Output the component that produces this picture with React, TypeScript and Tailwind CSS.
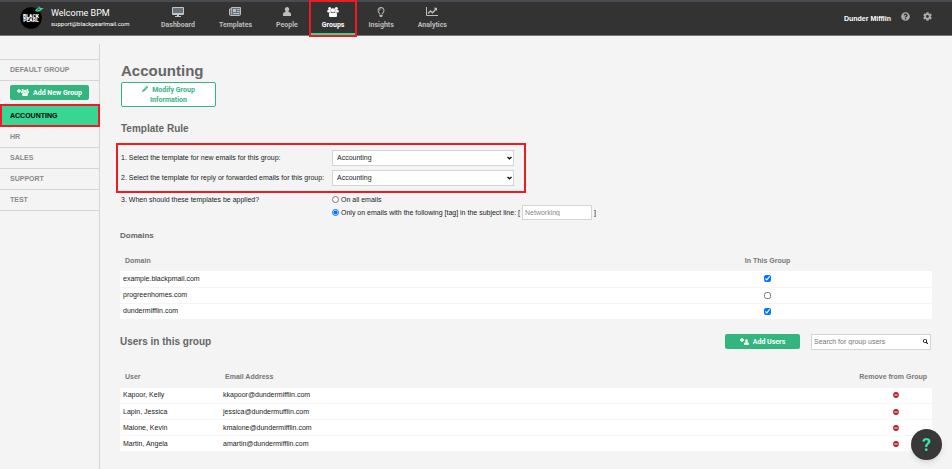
import { useState, type ReactNode } from "react";
import { FaCog, FaMinusCircle, FaPencilAlt, FaQuestionCircle, FaRegLightbulb, FaSearch } from "react-icons/fa";

const bodyFont = "font-['Liberation_Sans',Arial,sans-serif]";
const headFont = "font-['Roboto','Liberation_Sans',sans-serif]";

function PersonIcon({ className }: { className?: string }) {
  return (
    <svg viewBox="0 0 16 18" className={className} fill="currentColor" aria-hidden="true">
      <path d="M8 0c2.700 0 4.400 2 4.400 4.700 0 1.900-.8 3.700-1.900 4.700l3.600 1.600c1.100.5 1.900 1.500 1.900 2.800V18H0v-4.200c0-1.300.8-2.300 1.900-2.800l3.600-1.600C4.400 8.400 3.600 6.600 3.600 4.700 3.600 2 5.300 0 8 0z" />
    </svg>
  );
}

function GroupIcon({ className }: { className?: string }) {
  return (
    <svg viewBox="0 0 24 21" className={className} fill="currentColor" aria-hidden="true">
      <circle cx="5" cy="3.200" r="3.200" />
      <circle cx="19" cy="3.200" r="3.200" />
      <circle cx="12" cy="7" r="4.600" />
      <path d="M1.500 6.500h5.500c-.3 2.300.6 4 2 5.200H1.500C.5 11.700 0 11 0 10V8.300c0-1 .6-1.800 1.500-1.800zM17 6.500h5.500c.9 0 1.500.8 1.500 1.800V10c0 1-.5 1.700-1.500 1.700H15c1.400-1.200 2.300-2.900 2-5.200z" />
      <path d="M6.500 11c1.500 1.300 3.500 1.800 5.500 1.800s4-.5 5.500-1.800c1.700.4 2.800 1.800 2.800 3.700V19c0 1.200-.8 2-2 2H5.700c-1.200 0-2-.8-2-2v-4.300c0-1.900 1.100-3.300 2.800-3.700z" />
    </svg>
  );
}

function PlusIcon({ className }: { className?: string }) {
  return (
    <svg viewBox="0 0 6 6" className={className} fill="currentColor" aria-hidden="true">
      <path d="M2 0h2v2h2v2H4v2H2V4H0V2h2z" />
    </svg>
  );
}

function MonitorIcon() {
  return (
    <svg viewBox="0 0 12 10" className="h-[10px] w-3" aria-hidden="true">
      <rect x="0" y="0" width="12" height="8" rx="1" fill="#c4c4c4" />
      <rect x="1" y="1" width="10" height="5" fill="#66727c" />
      <path d="M5 8h2v1h2v1H3V9h2z" fill="#c4c4c4" />
    </svg>
  );
}

function TemplateIcon() {
  return (
    <svg viewBox="0 0 24 18" className="h-[9px] w-3" aria-hidden="true">
      <path d="M5 1h18v13.500a2.500 2.500 0 0 1-2.500 2.500h-17A2.500 2.500 0 0 1 1 14.500V4h4z" fill="#66727c" stroke="currentColor" strokeWidth="2" />
      <path d="M5 4v10.500" stroke="currentColor" strokeWidth="1.500" />
      <path d="M8 4h6v6H8zM16 4h5v2h-5zM16 8h5v2h-5zM8 12h13v2H8z" fill="currentColor" />
    </svg>
  );
}

function ChartIcon() {
  return (
    <svg viewBox="0 0 24 18" className="h-[9px] w-3" fill="none" stroke="currentColor" aria-hidden="true">
      <path d="M1 0v17h23" strokeWidth="2" />
      <path d="M4 13l5-5 4 3.500L20 4" strokeWidth="2.800" />
      <path d="M15.500 1.500H22V8z" fill="currentColor" stroke="none" />
    </svg>
  );
}

function Logo() {
  return (
    <svg viewBox="0 0 24 24" className="h-6 w-6" role="img" aria-label="Black Pearl">
      <circle cx="11" cy="13" r="10.800" fill="#000" />
      <text x="11" y="12.500" textAnchor="middle" fontSize="5" fontWeight="900" fill="#fff" fontFamily="Roboto, sans-serif">BLACK</text>
      <text x="11" y="17" textAnchor="middle" fontSize="5" fontWeight="900" fill="#fff" fontFamily="Roboto, sans-serif">PEARL</text>
      <path d="M15 6c.5-2.500 2.500-3 4-2.800L18 1l3 2 3 .3-2.500 1.500C20 7 17 7 15 6z" fill="#3fcf9f" />
      <path d="M16.500 6c1-1.300 2.200-1.800 3.500-1.800" stroke="#17382e" strokeWidth=".7" fill="none" />
    </svg>
  );
}

const navItems: { label: string; icon: ReactNode }[] = [
  { label: "Dashboard", icon: <MonitorIcon /> },
  { label: "Templates", icon: <TemplateIcon /> },
  { label: "People", icon: <PersonIcon className="h-[9px] w-2" /> },
  { label: "Groups", icon: <GroupIcon className="h-[10px] w-3" /> },
  { label: "Insights", icon: <FaRegLightbulb className="h-[10px] w-2" /> },
  { label: "Analytics", icon: <ChartIcon /> },
];

function Highlight() {
  return <span className="pointer-events-none absolute inset-0 z-10 border-2 border-[#ed1c24]" />;
}

function Header() {
  return (
    <header className={`flex h-9 shrink-0 border-t-2 border-b border-t-[#4a4b50] border-b-[#777] bg-[#333] text-white ${headFont}`}>
      <div className="flex w-[149px] items-start gap-[7px] pt-[3px] pl-5">
        <Logo />
        <div className="pt-[2px]">
          <div className="text-[9px] leading-[12px]">Welcome BPM</div>
          <div className="text-[6px] leading-[10px]">support@blackpearlmail.com</div>
        </div>
      </div>
      <nav className="flex">
        {navItems.map(({ label, icon }) => {
          const active = label === "Groups";
          return (
            <a
              key={label}
              href="#"
              className={`relative flex flex-col items-center px-3 pt-[4px] text-[7px] font-bold ${active ? "text-white" : "text-[#bdbdbd]"}`}
            >
              <span className="flex h-[11px] items-center">{icon}</span>
              <span className="pt-[3px] leading-[10px]">{label}</span>
              {active && <span className="absolute inset-x-0 bottom-0 h-[2px] bg-[#37d695]" />}
              {active && <span className="pointer-events-none absolute -inset-x-px -top-[2px] -bottom-[2px] z-10 border-2 border-[#ed1c24]" />}
            </a>
          );
        })}
      </nav>
      <div className="ml-auto flex items-start gap-[10px] pt-[10px] pr-5">
        <span className={`pt-[2px] text-[7px] leading-[10px] font-bold ${bodyFont}`}>Dunder Mifflin</span>
        <button aria-label="Help" className="text-[#aaa]"><FaQuestionCircle className="size-[9px]" /></button>
        <button aria-label="Settings" className="ml-[3px] text-[#aaa]"><FaCog className="size-[9px]" /></button>
      </div>
    </header>
  );
}

function SideLink({ children }: { children: ReactNode }) {
  return (
    <a href="#" className="flex h-[21px] items-center border-b border-[#d6d6d6] pl-[10px] text-[#8a8a8a]">
      {children}
    </a>
  );
}

function Sidebar() {
  return (
    <aside className="mt-[8px] w-[100px] shrink-0 border-r border-[#d6d6d6] pt-[15px] text-[7px] font-bold">
      <div className="border-t border-[#d6d6d6]">
        <SideLink>DEFAULT GROUP</SideLink>
      </div>
      <div className="px-[10px] py-[4px]">
        <button className={`flex h-[15px] w-full items-center justify-center rounded-[2px] bg-[#33b580] text-white ${headFont}`}>
          <PlusIcon className="mb-1 size-1" />
          <GroupIcon className="mr-1 h-[7px] w-2" />
          Add New Group
        </button>
      </div>
      <a href="#" className="relative -mr-px flex h-[23px] items-center bg-[#37d695] pl-[10px] text-black">
        ACCOUNTING
        <Highlight />
      </a>
      <SideLink>HR</SideLink>
      <SideLink>SALES</SideLink>
      <SideLink>SUPPORT</SideLink>
      <SideLink>TEST</SideLink>
    </aside>
  );
}

function TemplateSelect({ id }: { id: string }) {
  return (
    <div className="relative">
      <select id={id} defaultValue="Accounting" className="block h-4 w-[182px] appearance-none border border-[#d4d4d4] bg-white pl-1 text-[7px] text-[#222]">
        <option>Accounting</option>
        <option>HR</option>
        <option>Sales</option>
        <option>Support</option>
      </select>
      <svg viewBox="0 0 10 6" className="pointer-events-none absolute top-[6px] right-[2px] h-[4px] w-[5px]" fill="none" stroke="#111" strokeWidth="2.800" aria-hidden="true">
        <path d="M1 1l4 3.500L9 1" />
      </svg>
    </div>
  );
}

function TemplateRule() {
  const [scope, setScope] = useState("tag");
  return (
    <section className="text-[#222]">
      <div className="relative -ml-1 flex w-[410px] flex-col gap-1 py-[7px] pl-[5px]">
        <Highlight />
        <div className="flex items-center">
          <label htmlFor="new-template" className="w-[211px]">1. Select the template for new emails for this group:</label>
          <TemplateSelect id="new-template" />
        </div>
        <div className="flex items-center">
          <label htmlFor="reply-template" className="w-[211px]">2. Select the template for reply or forwarded emails for this group:</label>
          <TemplateSelect id="reply-template" />
        </div>
      </div>
      <div role="radiogroup" aria-label="When should these templates be applied?" className="flex pl-[1px]">
        <span className="w-[211px] pt-[2px]">3. When should these templates be applied?</span>
        <div>
          <label className="flex h-3 items-center gap-[2px] pt-[1px]">
            <input type="radio" name="scope" className="size-[7px]" checked={scope === "all"} onChange={() => setScope("all")} />
            On all emails
          </label>
          <div className="flex h-[15px] items-center">
            <label className="flex items-center gap-[2px]">
              <input type="radio" name="scope" className="size-[7px]" checked={scope === "tag"} onChange={() => setScope("tag")} />
              Only on emails with the following [tag] in the subject line: [
            </label>
            <input aria-label="Tag" placeholder="Networking" className="mx-[2px] h-[15px] w-[70px] border border-[#d4d4d4] bg-white px-[2px] placeholder:text-[#888]" />
            ]
          </div>
        </div>
      </div>
    </section>
  );
}

const domains = [
  { name: "example.blackpmail.com", member: true },
  { name: "progreenhomes.com", member: false },
  { name: "dundermifflin.com", member: true },
];

const users = [
  ["Kapoor, Kelly", "kkapoor@dundermifflin.com"],
  ["Lapin, Jessica", "jessica@dundermufflin.com"],
  ["Malone, Kevin", "kmalone@dundermifflin.com"],
  ["Martin, Angela", "amartin@dundermifflin.com"],
];

function DomainTable() {
  return (
    <table className="w-full table-fixed text-[#222]">
      <thead className="text-[#777]">
        <tr className="h-[21px]">
          <th className="pl-[5px] text-left">Domain</th>
          <th className="w-[329px]">In This Group</th>
        </tr>
      </thead>
      <tbody>
        {domains.map((d) => (
          <tr key={d.name} className="h-4 border-b border-[#f4f4f4] bg-white">
            <td className="pl-[3px]">{d.name}</td>
            <td>
              <input type="checkbox" aria-label={d.name} defaultChecked={d.member} className="mx-auto block size-[7px]" />
            </td>
          </tr>
        ))}
      </tbody>
    </table>
  );
}

function UserTable() {
  return (
    <table className="w-full table-fixed text-[#222]">
      <thead className="text-[#777]">
        <tr className="h-[21px]">
          <th className="w-[100px] pl-[5px] text-left">User</th>
          <th className="pl-[5px] text-left">Email Address</th>
          <th className="w-[78px] pr-[5px] text-right">Remove from Group</th>
        </tr>
      </thead>
      <tbody>
        {users.map(([name, email]) => (
          <tr key={name} className="h-4 border-b border-[#f4f4f4] bg-white">
            <td className="pl-[3px]">{name}</td>
            <td className="pl-[3px]">{email}</td>
            <td className="pl-[6px]">
              <button aria-label={`Remove ${name}`} className="mx-auto block text-[#c0161c]"><FaMinusCircle className="size-[6px]" /></button>
            </td>
          </tr>
        ))}
      </tbody>
    </table>
  );
}

export default function App() {
  return (
    <div className={`flex min-h-screen flex-col bg-[#f4f4f4] text-[7px] leading-[10px] ${bodyFont}`}>
      <Header />
      <div className="flex flex-1">
        <Sidebar />
        <main className="min-w-0 flex-1 pt-[25px] pr-5 pl-5">
          <h1 className="pl-[1px] text-[15px] leading-[20px] font-bold text-[#666]">Accounting</h1>
          <button className={`mt-[1px] ml-[1px] h-[25px] w-[95px] rounded-[2px] border border-[#33b580] bg-white px-4 font-bold text-[#33b580] ${headFont}`}>
            <FaPencilAlt className="mr-1 inline size-[6px] align-baseline" />
            Modify Group Information
          </button>
          <h2 className="mt-4 mb-2 pl-[1px] text-[10px] leading-[12px] font-bold text-[#666]">Template Rule</h2>
          <TemplateRule />
          <h3 className="mt-[11px] mb-[9px] text-[8px] leading-[10px] font-bold text-[#666]">Domains</h3>
          <DomainTable />
          <div className="mt-[14px] mb-[17px] flex h-4 items-center pr-[1px]">
            <h2 className="text-[10px] leading-[12px] font-bold text-[#666]">Users in this group</h2>
            <button className={`ml-auto flex h-[15px] w-[75px] items-center justify-center rounded-[2px] bg-[#33b580] font-bold text-white ${headFont}`}>
              <PlusIcon className="mb-1 size-1" />
              <PersonIcon className="mr-1 h-[6px] w-[5px]" />
              Add Users
            </button>
            <div className="ml-[11px] flex h-4 w-[120px] items-center border border-[#d4d4d4] bg-white px-[2px]">
              <input aria-label="Search for group users" placeholder="Search for group users" className="min-w-0 flex-1 outline-none placeholder:text-[#777]" />
              <FaSearch className="size-[5px] text-black" />
            </div>
          </div>
          <UserTable />
        </main>
      </div>
      <button aria-label="Open help" className={`fixed right-[10px] bottom-[9px] size-[31px] rounded-full bg-[#383838] text-[18px] leading-[31px] font-bold text-[#37e6a8] shadow-md ${headFont}`}>
        ?
      </button>
    </div>
  );
}
